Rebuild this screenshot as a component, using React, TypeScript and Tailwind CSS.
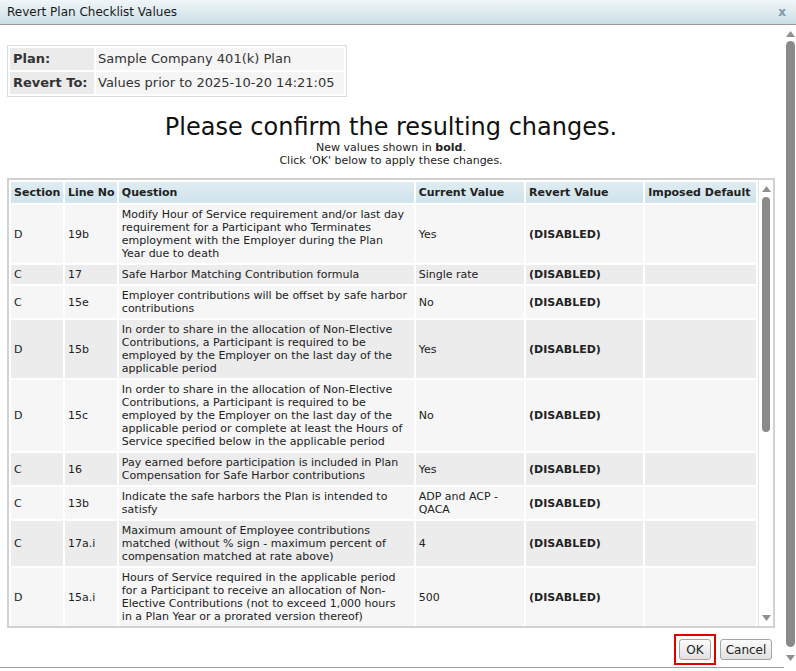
import React from 'react';

interface Row {
  section: string;
  line: string;
  question: string[];
  current: string[];
  revert: string;
}

const rows: Row[] = [
  {
    section: 'D',
    line: '19b',
    question: [
      'Modify Hour of Service requirement and/or last day',
      'requirement for a Participant who Terminates',
      'employment with the Employer during the Plan',
      'Year due to death',
    ],
    current: ['Yes'],
    revert: '(DISABLED)',
  },
  { section: 'C', line: '17', question: ['Safe Harbor Matching Contribution formula'], current: ['Single rate'], revert: '(DISABLED)' },
  {
    section: 'C',
    line: '15e',
    question: ['Employer contributions will be offset by safe harbor', 'contributions'],
    current: ['No'],
    revert: '(DISABLED)',
  },
  {
    section: 'D',
    line: '15b',
    question: [
      'In order to share in the allocation of Non-Elective',
      'Contributions, a Participant is required to be',
      'employed by the Employer on the last day of the',
      'applicable period',
    ],
    current: ['Yes'],
    revert: '(DISABLED)',
  },
  {
    section: 'D',
    line: '15c',
    question: [
      'In order to share in the allocation of Non-Elective',
      'Contributions, a Participant is required to be',
      'employed by the Employer on the last day of the',
      'applicable period or complete at least the Hours of',
      'Service specified below in the applicable period',
    ],
    current: ['No'],
    revert: '(DISABLED)',
  },
  {
    section: 'C',
    line: '16',
    question: ['Pay earned before participation is included in Plan', 'Compensation for Safe Harbor contributions'],
    current: ['Yes'],
    revert: '(DISABLED)',
  },
  {
    section: 'C',
    line: '13b',
    question: ['Indicate the safe harbors the Plan is intended to', 'satisfy'],
    current: ['ADP and ACP -', 'QACA'],
    revert: '(DISABLED)',
  },
  {
    section: 'C',
    line: '17a.i',
    question: [
      'Maximum amount of Employee contributions',
      'matched (without % sign - maximum percent of',
      'compensation matched at rate above)',
    ],
    current: ['4'],
    revert: '(DISABLED)',
  },
  {
    section: 'D',
    line: '15a.i',
    question: [
      'Hours of Service required in the applicable period',
      'for a Participant to receive an allocation of Non-',
      'Elective Contributions (not to exceed 1,000 hours',
      'in a Plan Year or a prorated version thereof)',
    ],
    current: ['500'],
    revert: '(DISABLED)',
  },
];

function Arrow({ up }: { up?: boolean }) {
  return (
    <svg width="9" height="6" viewBox="0 0 9 6" className="block">
      {up ? <polygon points="4.5,0 9,6 0,6" fill="#8f8f8f" /> : <polygon points="0,0 9,0 4.5,6" fill="#8f8f8f" />}
    </svg>
  );
}

function Lines({ lines }: { lines: string[] }) {
  return (
    <>
      {lines.map((l, i) => (
        <div key={i} className="whitespace-nowrap">
          {l}
        </div>
      ))}
    </>
  );
}

export default function App() {
  return (
    <div className="w-[796px] h-[671px] overflow-hidden bg-white text-[#222] font-['DejaVu_Sans',sans-serif]">
      {/* Title bar */}
      <div className="h-[25px] flex items-center justify-between pl-[7px] pr-[10px] bg-gradient-to-b from-[#f1f6f8] to-[#c9dfe6] border-b border-[#9a9a9a]">
        <span className="text-[12px] text-[#1a1a1a]">Revert Plan Checklist Values</span>
        <span className="text-[12px] font-bold text-[#7f98aa] leading-none">x</span>
      </div>

      <div className="flex h-[646px]">
        {/* Dialog content */}
        <div className="w-[784px] h-[643px] border-b border-[#a0a0a0] pl-[7px] pr-[9px]">
          {/* Plan info */}
          <div className="mt-[20px] inline-block border border-[#d6dde3] p-[2px]">
            <table className="border-separate border-spacing-[2px] -m-[2px] text-[13px]">
              <tbody>
                <tr className="h-[22px]">
                  <td className="w-[84px] bg-[#ebebeb] pl-[3px] font-bold text-[#333]">Plan:</td>
                  <td className="w-[248px] bg-[#f5f5f5] pl-[2px] text-[#333]">Sample Company 401(k) Plan</td>
                </tr>
                <tr className="h-[22px]">
                  <td className="bg-[#ebebeb] pl-[3px] font-bold text-[#333]">Revert To:</td>
                  <td className="bg-[#f5f5f5] pl-[2px] text-[#333]">Values prior to 2025-10-20 14:21:05</td>
                </tr>
              </tbody>
            </table>
          </div>

          {/* Heading */}
          <div className="text-center mt-[10px]">
            <div className="text-[24px] leading-[27px] text-[#111]">Please confirm the resulting changes.</div>
            <div className="text-[11px] leading-[13px]">
              New values shown in <b>bold</b>.
            </div>
            <div className="text-[11px] leading-[13px]">Click 'OK' below to apply these changes.</div>
          </div>

          {/* Changes table */}
          <div className="mt-[11px] h-[450px] border-2 border-[#d2d2d2] flex overflow-hidden">
            <div className="flex-1 overflow-hidden">
              <table className="border-separate border-spacing-[2px] text-[11px] leading-[13px]">
                <thead>
                  <tr className="h-[21px] text-left">
                    <th className="w-[52px] pl-[3px] bg-gradient-to-b from-[#dfecf1] to-[#d0e4eb] font-bold whitespace-nowrap">Section</th>
                    <th className="w-[52px] pl-[3px] bg-gradient-to-b from-[#dfecf1] to-[#d0e4eb] font-bold whitespace-nowrap">Line No</th>
                    <th className="w-[295px] pl-[3px] bg-gradient-to-b from-[#dfecf1] to-[#d0e4eb] font-bold">Question</th>
                    <th className="w-[109px] pl-[3px] bg-gradient-to-b from-[#dfecf1] to-[#d0e4eb] font-bold whitespace-nowrap">Current Value</th>
                    <th className="w-[118px] pl-[3px] bg-gradient-to-b from-[#dfecf1] to-[#d0e4eb] font-bold whitespace-nowrap">Revert Value</th>
                    <th className="w-[111px] pl-[3px] bg-gradient-to-b from-[#dfecf1] to-[#d0e4eb] font-bold whitespace-nowrap">Imposed Default</th>
                  </tr>
                </thead>
                <tbody>
                  {rows.map((r, i) => {
                    const bg = i % 2 === 0 ? 'bg-[#f6f6f6]' : 'bg-[#ececec]';
                    return (
                      <tr key={i} className="align-middle">
                        <td className={`${bg} pl-[3px] py-[3px]`}>{r.section}</td>
                        <td className={`${bg} pl-[3px] py-[3px]`}>{r.line}</td>
                        <td className={`${bg} pl-[3px] py-[3px]`}>
                          <Lines lines={r.question} />
                        </td>
                        <td className={`${bg} pl-[3px] py-[3px]`}>
                          <Lines lines={r.current} />
                        </td>
                        <td className={`${bg} pl-[3px] py-[3px] font-bold`}>{r.revert}</td>
                        <td className={`${bg} pl-[3px] py-[3px]`}></td>
                      </tr>
                    );
                  })}
                </tbody>
              </table>
            </div>
            {/* table scrollbar */}
            <div className="w-[15px] border-l border-[#e2e2e2] flex flex-col items-center pt-[6px] pb-[5px]">
              <Arrow up />
              <div className="mt-[5px] w-[8px] h-[235px] rounded-full bg-[#8a8a8a]" />
              <div className="flex-1" />
              <Arrow />
            </div>
          </div>

          {/* Buttons */}
          <div className="mt-[6px] flex justify-end items-center gap-[4px] pr-[3px]">
            <div className="border-2 border-[#e00000] p-[3px]">
              <button className="block w-[32px] h-[21px] rounded-[3px] border border-[#a5a5a5] bg-gradient-to-b from-[#fbfbfb] to-[#e1e1e1] text-[12px] text-[#222] leading-none">
                OK
              </button>
            </div>
            <button className="block w-[52px] h-[21px] rounded-[3px] border border-[#a5a5a5] bg-gradient-to-b from-[#fbfbfb] to-[#e1e1e1] text-[12px] text-[#222] leading-none">
              Cancel
            </button>
          </div>
        </div>

        {/* Page scrollbar */}
        <div className="w-[12px] flex flex-col items-center pt-[6px]">
          <Arrow up />
          <div className="mt-[4px] w-[9px] h-[606px] rounded-full bg-[#8a8a8a]" />
          <div className="mt-[8px]">
            <Arrow />
          </div>
        </div>
      </div>
    </div>
  );
}
